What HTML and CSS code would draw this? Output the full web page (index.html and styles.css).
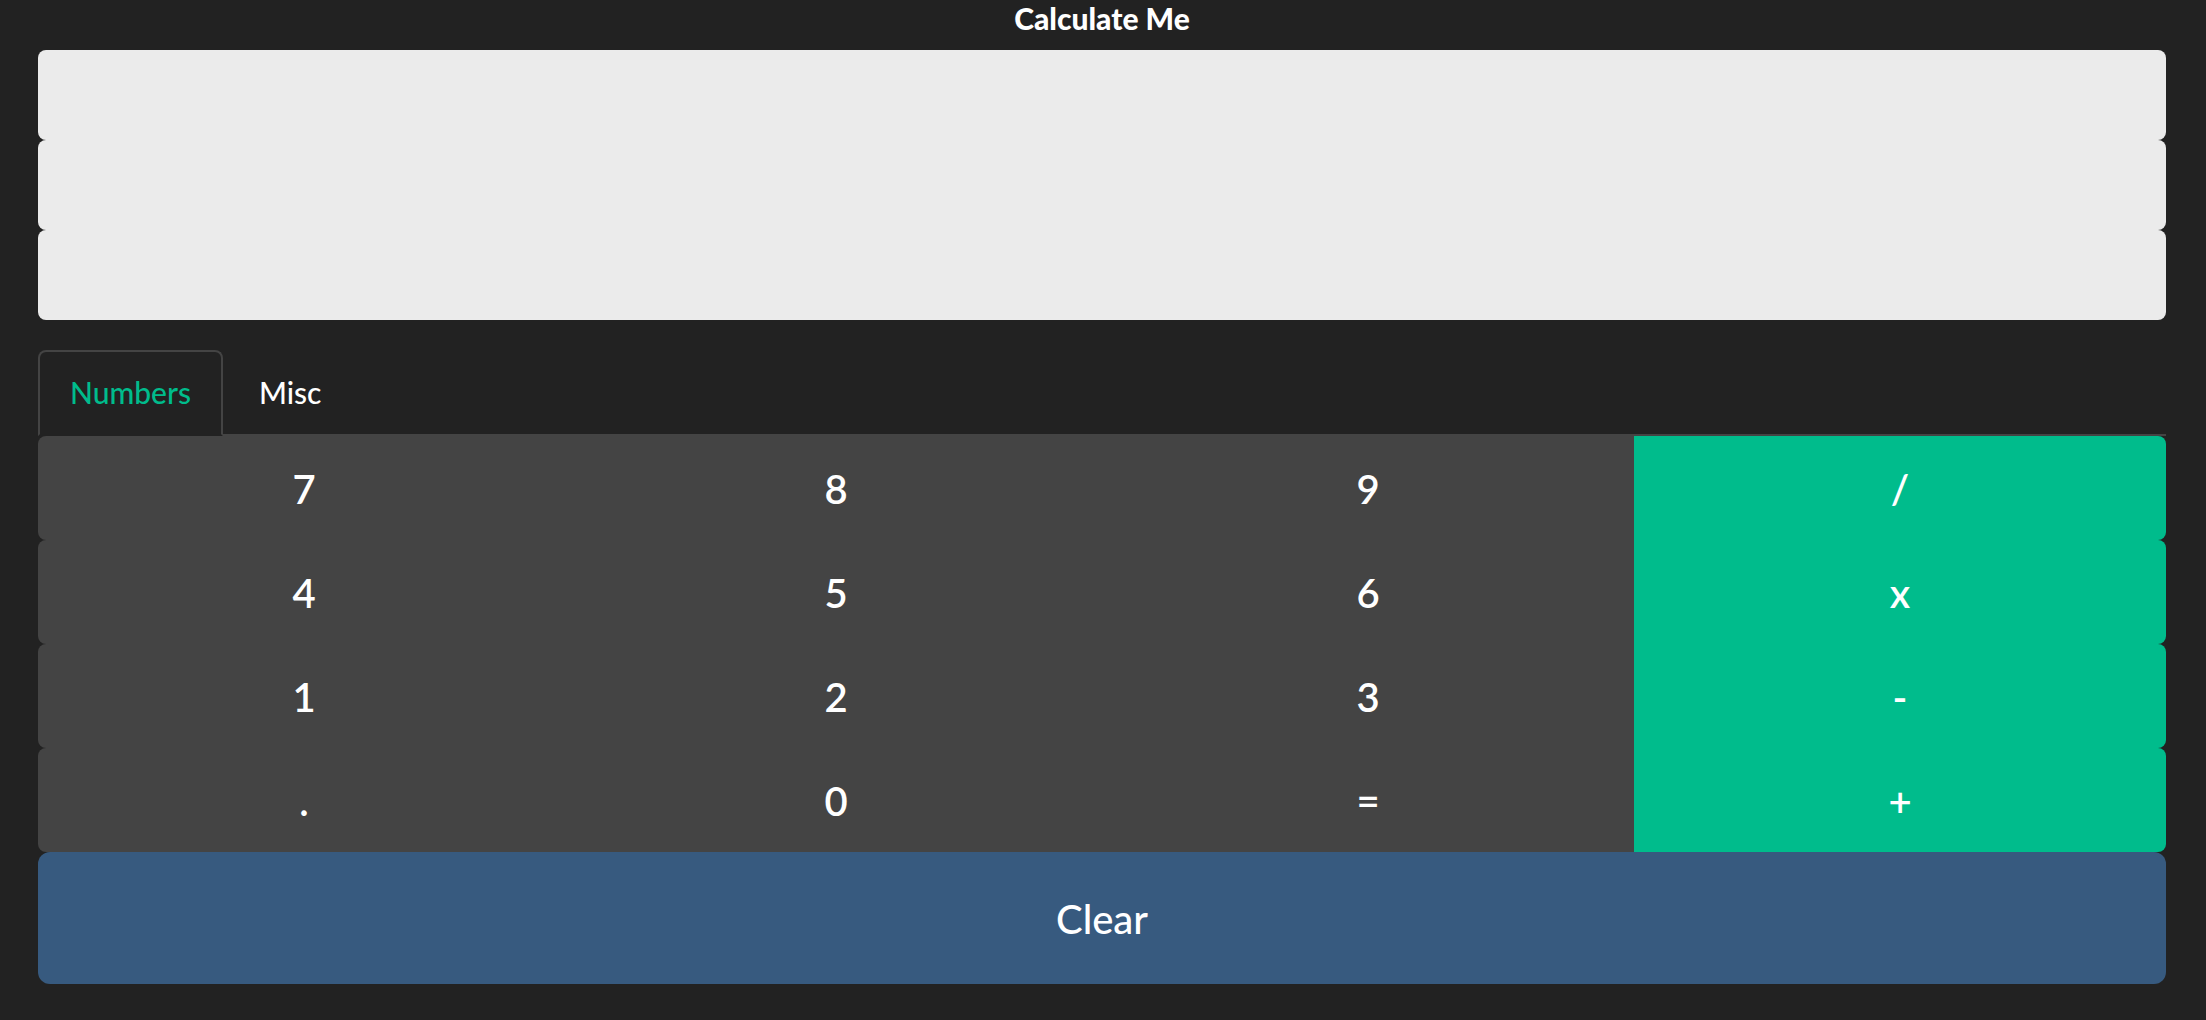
FILE: index.html
```html
<!DOCTYPE html>
<html lang="en">
<head>
<meta charset="utf-8">
<meta name="viewport" content="width=device-width, initial-scale=1">
<title>Calculate Me</title>
<link rel="stylesheet" href="styles.css">
</head>
<body>
<main class="calculator">
  <h1 class="title">Calculate Me</h1>
  <div class="display">
    <input class="line" type="text" aria-label="First operand" readonly>
    <input class="line" type="text" aria-label="Operator" readonly>
    <input class="line" type="text" aria-label="Second operand" readonly>
  </div>
  <nav class="tabs">
    <a class="tab active" href="#numbers">Numbers</a>
    <a class="tab" href="#misc">Misc</a>
  </nav>
  <section class="keys" id="numbers">
    <div class="row"><button class="key">7</button><button class="key">8</button><button class="key">9</button><button class="key operator">/</button></div>
    <div class="row"><button class="key">4</button><button class="key">5</button><button class="key">6</button><button class="key operator">x</button></div>
    <div class="row"><button class="key">1</button><button class="key">2</button><button class="key">3</button><button class="key operator">-</button></div>
    <div class="row"><button class="key">.</button><button class="key">0</button><button class="key">=</button><button class="key operator">+</button></div>
  </section>
  <button class="clear">Clear</button>
</main>
</body>
</html>
```

FILE: styles.css
```css
* {
  box-sizing: border-box;
}

body {
  margin: 0;
  background: #222;
  color: #fff;
  font-family: Lato, "Liberation Sans", sans-serif;
  font-size: 30px;
  font-weight: 600;
  line-height: 46px;
}

.calculator {
  padding: 0 40px 0 38px;
}

.title {
  margin: 0 0 14px;
  font-size: 30px;
  font-weight: 900;
  line-height: 36px;
  text-align: center;
}

.display {
  display: flex;
  flex-direction: column;
  margin-bottom: 30px;
}

.line {
  width: 100%;
  height: 90px;
  padding: 12px 24px;
  border: 0;
  border-radius: 8px;
  background: #ebebeb;
  color: #444;
  font: inherit;
}

.tabs {
  display: flex;
  gap: 4px;
  border-bottom: 2px solid #444;
}

.tab {
  margin-bottom: -2px;
  padding: 17px 30px 19px;
  border: 2px solid transparent;
  border-radius: 8px 8px 0 0;
  color: #fff;
  font-weight: 500;
  text-decoration: none;
}

.tab.active {
  border-color: #444 #444 #222;
  background: #222;
  color: #00bc8c;
}

.row {
  display: flex;
  overflow: hidden;
  border-radius: 8px;
}

.key {
  flex: 1;
  height: 104px;
  padding: 2px 0 0;
  border: 0;
  background: #444;
  color: #fff;
  font: inherit;
  font-size: 40px;
}

.operator {
  background: #00bc8c;
}

.clear {
  display: block;
  width: 100%;
  height: 132px;
  padding: 2px 0 0;
  border: 0;
  border-radius: 12px;
  background: #375a7f;
  color: #fff;
  font: inherit;
  font-size: 40px;
  font-weight: 500;
}
```
